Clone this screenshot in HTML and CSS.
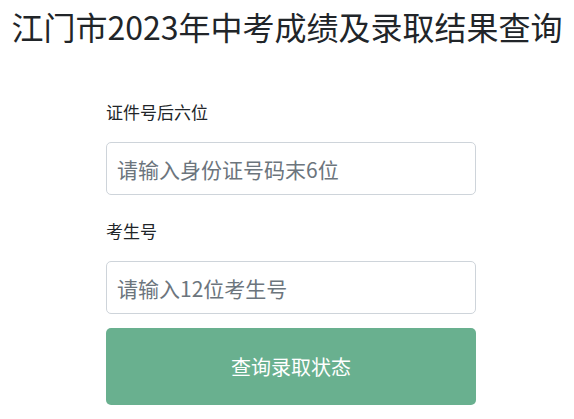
FILE: index.html
```html
<!DOCTYPE html>
<html lang="zh-CN">
<head>
<meta charset="utf-8">
<title>江门市2023年中考成绩及录取结果查询</title>
<link rel="stylesheet" href="styles.css">
</head>
<body>
<h1 class="title">江门市2023年中考成绩及录取结果查询</h1>
<form class="query-form">
  <div class="form-group">
    <label class="form-label" for="idno">证件号后六位</label>
    <input class="form-input" id="idno" type="text" placeholder="请输入身份证号码末6位">
  </div>
  <div class="form-group">
    <label class="form-label" for="examno">考生号</label>
    <input class="form-input" id="examno" type="text" placeholder="请输入12位考生号">
  </div>
  <button class="submit-btn" type="button">查询录取状态</button>
</form>
</body>
</html>
```

FILE: styles.css
```css
* { box-sizing: border-box; }
html, body {
  margin: 0;
  padding: 0;
  background: #ffffff;
  font-family: "Noto Sans CJK SC", "Noto Sans", sans-serif;
  color: #212529;
}
.title {
  margin: 0;
  padding-top: 4px;
  font-size: 32px;
  line-height: 44px;
  font-weight: 400;
  text-align: center;
  color: #212529;
  white-space: nowrap;
}
.query-form {
  width: 370px;
  margin: 52px 0 0 106px;
  display: flex;
  flex-direction: column;
}
.form-group {
  display: flex;
  flex-direction: column;
  margin-bottom: 24px;
}
.form-group:nth-of-type(2) {
  margin-bottom: 14px;
}
.form-label {
  font-size: 17px;
  line-height: 24px;
  margin-bottom: 18px;
  color: #212529;
}
.form-input {
  height: 53px;
  width: 100%;
  padding: 0 10px;
  border: 1px solid #ced4da;
  border-radius: 5px;
  font-family: inherit;
  font-size: 21px;
  color: #495057;
  background: #fff;
  outline: none;
}
.form-input::placeholder {
  color: #6c757d;
  opacity: 1;
}
.submit-btn {
  height: 77px;
  width: 100%;
  border: none;
  border-radius: 5px;
  background: #69b08f;
  color: #ffffff;
  font-family: inherit;
  font-size: 20px;
  cursor: pointer;
}
```
